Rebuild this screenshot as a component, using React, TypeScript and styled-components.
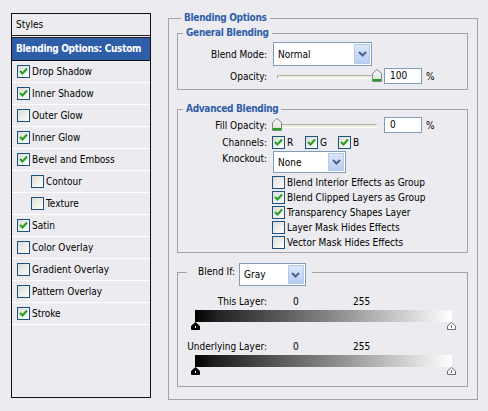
import styled, { createGlobalStyle } from "styled-components";

const GlobalStyle = createGlobalStyle`
  body {
    margin: 0;
    background: #ecebef;
    font-family: "DejaVu Sans Condensed", "DejaVu Sans", sans-serif;
    font-size: 10px;
    color: #000;
  }
`;

const BLUE = "#2f5ea9";

const effects = [
  { name: "Drop Shadow", on: true },
  { name: "Inner Shadow", on: true },
  { name: "Outer Glow", on: false },
  { name: "Inner Glow", on: true },
  { name: "Bevel and Emboss", on: true },
  { name: "Contour", on: false, sub: true },
  { name: "Texture", on: false, sub: true },
  { name: "Satin", on: true },
  { name: "Color Overlay", on: false },
  { name: "Gradient Overlay", on: false },
  { name: "Pattern Overlay", on: false },
  { name: "Stroke", on: true },
];

const advancedOptions = [
  { name: "Blend Interior Effects as Group", on: false },
  { name: "Blend Clipped Layers as Group", on: true },
  { name: "Transparency Shapes Layer", on: true },
  { name: "Layer Mask Hides Effects", on: false },
  { name: "Vector Mask Hides Effects", on: false },
];

function CheckBox({ on }: { on: boolean }) {
  return (
    <Box>
      {on && (
        <svg width="11" height="11" viewBox="0 0 11 11">
          <polyline
            points="2,5 4.5,7.5 9,2.5"
            fill="none"
            stroke="#21a121"
            strokeWidth="2"
          />
        </svg>
      )}
    </Box>
  );
}

function Dropdown({ value, width, height }: { value: string; width: number; height: number }) {
  return (
    <Select $w={width} $h={height}>
      <SelectText>{value}</SelectText>
      <SelectButton>
        <svg width="9" height="6" viewBox="0 0 9 6">
          <polyline points="1,1 4.5,4.5 8,1" fill="none" stroke="#4d6185" strokeWidth="2" />
        </svg>
      </SelectButton>
    </Select>
  );
}

function Slider({ pos, trackLeft, trackRight }: { pos: number; trackLeft: number; trackRight: number }) {
  return (
    <SliderWrap>
      <Track $l={trackLeft} $r={trackRight} />
      <Thumb style={{ left: pos }}>
        <svg width="10" height="13" viewBox="0 0 10 13">
          <defs>
            <linearGradient id="thumbfill" x1="0" y1="0" x2="0" y2="1">
              <stop offset="0" stopColor="#ffffff" />
              <stop offset="1" stopColor="#dcdcd4" />
            </linearGradient>
          </defs>
          <path d="M5 0.5 L9.5 4.5 L9.5 12.5 L0.5 12.5 L0.5 4.5 Z" fill="url(#thumbfill)" stroke="#7d8a8a" />
          <rect x="1" y="10" width="8" height="2" fill="#21a121" />
        </svg>
      </Thumb>
    </SliderWrap>
  );
}

function RangeThumb({ dark }: { dark?: boolean }) {
  return (
    <svg width="9" height="8" viewBox="0 0 9 8">
      <path
        d="M4.5 0.5 L8.5 4 L8.5 7.5 L0.5 7.5 L0.5 4 Z"
        fill={dark ? "#000" : "#fff"}
        stroke={dark ? "#000" : "#6e6e6e"}
      />
      {dark ? (
        <rect x="4" y="4" width="1" height="2" fill="#fff" />
      ) : (
        <rect x="4" y="3" width="1" height="3" fill="#6e6e6e" />
      )}
    </svg>
  );
}

function LayerRange({ label }: { label: string }) {
  return (
    <>
      <RangeRow>
        <Label>{label}</Label>
        <RangeValue>0</RangeValue>
        <RangeValue>255</RangeValue>
      </RangeRow>
      <GradientBar />
      <ThumbRow>
        <RangeThumb dark />
        <RangeThumb />
      </ThumbRow>
    </>
  );
}

export default function App() {
  return (
    <>
      <GlobalStyle />
      <Page>
        <StylesPanel>
          <StylesHeader>Styles</StylesHeader>
          <SelectedItem>Blending Options: Custom</SelectedItem>
          {effects.map((e) => (
            <EffectItem key={e.name} $sub={e.sub}>
              <CheckBox on={e.on} />
              <span>{e.name}</span>
            </EffectItem>
          ))}
        </StylesPanel>

        <OuterGroup>
          <Legend>Blending Options</Legend>

          <InnerGroup>
            <Legend $inner>General Blending</Legend>
            <GeneralBody>
              <Row $h={24}>
                <Label>Blend Mode:</Label>
                <Dropdown value="Normal" width={99} height={24} />
              </Row>
              <Row $h={16} $mt={2}>
                <Label>Opacity:</Label>
                <Slider pos={99} trackLeft={4} trackRight={10} />
                <NumberBox>100</NumberBox>
                <Percent>%</Percent>
              </Row>
            </GeneralBody>
          </InnerGroup>

          <InnerGroup $mt={12}>
            <Legend $inner>Advanced Blending</Legend>
            <AdvancedBody>
              <Row $h={16}>
                <Label>Fill Opacity:</Label>
                <Slider pos={-1} trackLeft={0} trackRight={6} />
                <NumberBox>0</NumberBox>
                <Percent>%</Percent>
              </Row>
              <Row $h={14} $mt={2}>
                <Label>Channels:</Label>
                <Channels>
                  {["R", "G", "B"].map((c) => (
                    <Channel key={c}>
                      <CheckBox on />
                      <span>{c}</span>
                    </Channel>
                  ))}
                </Channels>
              </Row>
              <Row $h={22} $mt={2} $top>
                <Label $pt={2}>Knockout:</Label>
                <Dropdown value="None" width={73} height={22} />
              </Row>
              <OptionList>
                {advancedOptions.map((o) => (
                  <OptionItem key={o.name}>
                    <CheckBox on={o.on} />
                    <span>{o.name}</span>
                  </OptionItem>
                ))}
              </OptionList>
            </AdvancedBody>
          </InnerGroup>

          <InnerGroup $mt={10}>
            <BlendIfLegend>
              <BlendIfLabel>Blend If:</BlendIfLabel>
              <Dropdown value="Gray" width={67} height={23} />
            </BlendIfLegend>
            <BlendIfBody>
              <LayerRange label="This Layer:" />
              <Spacer />
              <LayerRange label="Underlying Layer:" />
            </BlendIfBody>
          </InnerGroup>
        </OuterGroup>
      </Page>
    </>
  );
}

const Page = styled.div`
  display: flex;
  align-items: flex-start;
  padding-left: 11px;
`;

const StylesPanel = styled.div`
  margin-top: 13px;
  width: 140px;
  height: 385px;
  box-sizing: border-box;
  border: 1px solid #111;
  display: flex;
  flex-direction: column;
`;

const StylesHeader = styled.div`
  height: 21px;
  line-height: 21px;
  padding-left: 4px;
  border-bottom: 3px double #222;
`;

const SelectedItem = styled.div`
  height: 22px;
  line-height: 22px;
  padding-left: 4px;
  background: ${BLUE};
  color: #fff;
  font-weight: bold;
  letter-spacing: -0.3px;
  border-bottom: 1px solid #111;
  white-space: nowrap;
`;

const EffectItem = styled.div<{ $sub?: boolean }>`
  height: 21px;
  border-bottom: 1px solid #fff;
  display: flex;
  align-items: center;
  gap: 2px;
  padding-left: ${(p) => (p.$sub ? 19 : 5)}px;
`;

const Box = styled.div`
  width: 13px;
  height: 13px;
  box-sizing: border-box;
  border: 1px solid #1c5180;
  background: linear-gradient(135deg, #dcdcd6 0%, #f4f4f2 70%, #ffffff 100%);
  display: flex;
  align-items: center;
  justify-content: center;
  flex: none;
`;

const OuterGroup = styled.fieldset`
  margin: 11px 0 0 17px;
  padding: 0 9px 12px 8px;
  width: 310px;
  box-sizing: border-box;
  border: 1px solid #a3a3a3;
  min-inline-size: auto;
`;

const Legend = styled.legend<{ $inner?: boolean }>`
  margin-left: ${(p) => (p.$inner ? 5 : 4)}px;
  padding: 0 3px;
  line-height: 14px;
  font-weight: bold;
  letter-spacing: -0.3px;
  color: ${BLUE};
`;

const InnerGroup = styled.fieldset<{ $mt?: number }>`
  margin: ${(p) => p.$mt ?? 1}px 0 0 0;
  padding: 0;
  border: 1px solid #a3a3a3;
  min-inline-size: auto;
`;

const GeneralBody = styled.div`
  padding: 2px 0 5px;
`;

const AdvancedBody = styled.div`
  padding: 1px 0 2px;
`;

const Row = styled.div<{ $h: number; $mt?: number; $top?: boolean }>`
  display: flex;
  align-items: ${(p) => (p.$top ? "flex-start" : "center")};
  height: ${(p) => p.$h}px;
  margin-top: ${(p) => p.$mt ?? 0}px;
`;

const Label = styled.div<{ $pt?: number }>`
  width: 89px;
  margin-right: 6px;
  text-align: right;
  white-space: nowrap;
  padding-top: ${(p) => p.$pt ?? 0}px;
  flex: none;
`;

const Select = styled.div<{ $w: number; $h: number }>`
  width: ${(p) => p.$w}px;
  height: ${(p) => p.$h}px;
  box-sizing: border-box;
  border: 1px solid #7f9db9;
  background: #fff;
  display: flex;
  align-items: center;
  padding: 1px;
  flex: none;
`;

const SelectText = styled.span`
  flex: 1;
  padding-left: 3px;
`;

const SelectButton = styled.div`
  width: 16px;
  align-self: stretch;
  box-sizing: border-box;
  border: 1px solid #b6c8ee;
  background: linear-gradient(#dbe6fc, #b9cdf5);
  display: flex;
  align-items: center;
  justify-content: center;
`;

const SliderWrap = styled.div`
  position: relative;
  width: 110px;
  height: 16px;
  display: flex;
  align-items: center;
  flex: none;
`;

const Track = styled.div<{ $l: number; $r: number }>`
  flex: 1;
  margin: 2px ${(p) => p.$r}px 0 ${(p) => p.$l}px;
  height: 2px;
  border-top: 1px solid #b0b0a8;
  border-bottom: 1px solid #fff;
  border-left: 1px solid #b0b0a8;
  background: #efeee0;
  border-radius: 1px;
`;

const Thumb = styled.div`
  position: absolute;
  top: 1px;
  width: 10px;
  height: 13px;
  display: flex;
`;

const NumberBox = styled.div`
  margin-left: 1px;
  width: 38px;
  height: 16px;
  box-sizing: border-box;
  border: 1px solid #7f9db9;
  background: #fff;
  line-height: 14px;
  padding-left: 5px;
`;

const Percent = styled.span`
  margin-left: 4px;
`;

const Channels = styled.div`
  display: flex;
  margin-left: -1px;
`;

const Channel = styled.div`
  width: 33px;
  display: flex;
  align-items: center;
  gap: 2px;
`;

const OptionList = styled.div`
  margin: 2px 0 0 94px;
  display: flex;
  flex-direction: column;
`;

const OptionItem = styled.div`
  height: 15px;
  display: flex;
  align-items: center;
  gap: 2px;
  white-space: nowrap;
`;

const BlendIfLegend = styled.legend`
  margin-left: 9px;
  padding: 0 6px 0 11px;
  height: 18px;
  display: flex;
  align-items: flex-start;
  gap: 4px;
`;

const BlendIfLabel = styled.span`
  line-height: 18px;
`;

const BlendIfBody = styled.div`
  padding: 14px 0 11px;
`;

const RangeRow = styled.div`
  display: flex;
  align-items: center;
  height: 13px;
`;

const RangeValue = styled.span`
  width: 60px;
  &:first-of-type {
    margin-left: 20px;
  }
`;

const GradientBar = styled.div`
  margin: 2px 0 0 17px;
  width: 257px;
  height: 12px;
  background: linear-gradient(to right, #000 0%, #202020 8%, #808080 50%, #fff 100%);
`;

const ThumbRow = styled.div`
  margin-left: 13px;
  width: 265px;
  height: 8px;
  display: flex;
  justify-content: space-between;
`;

const Spacer = styled.div`
  height: 10px;
`;
